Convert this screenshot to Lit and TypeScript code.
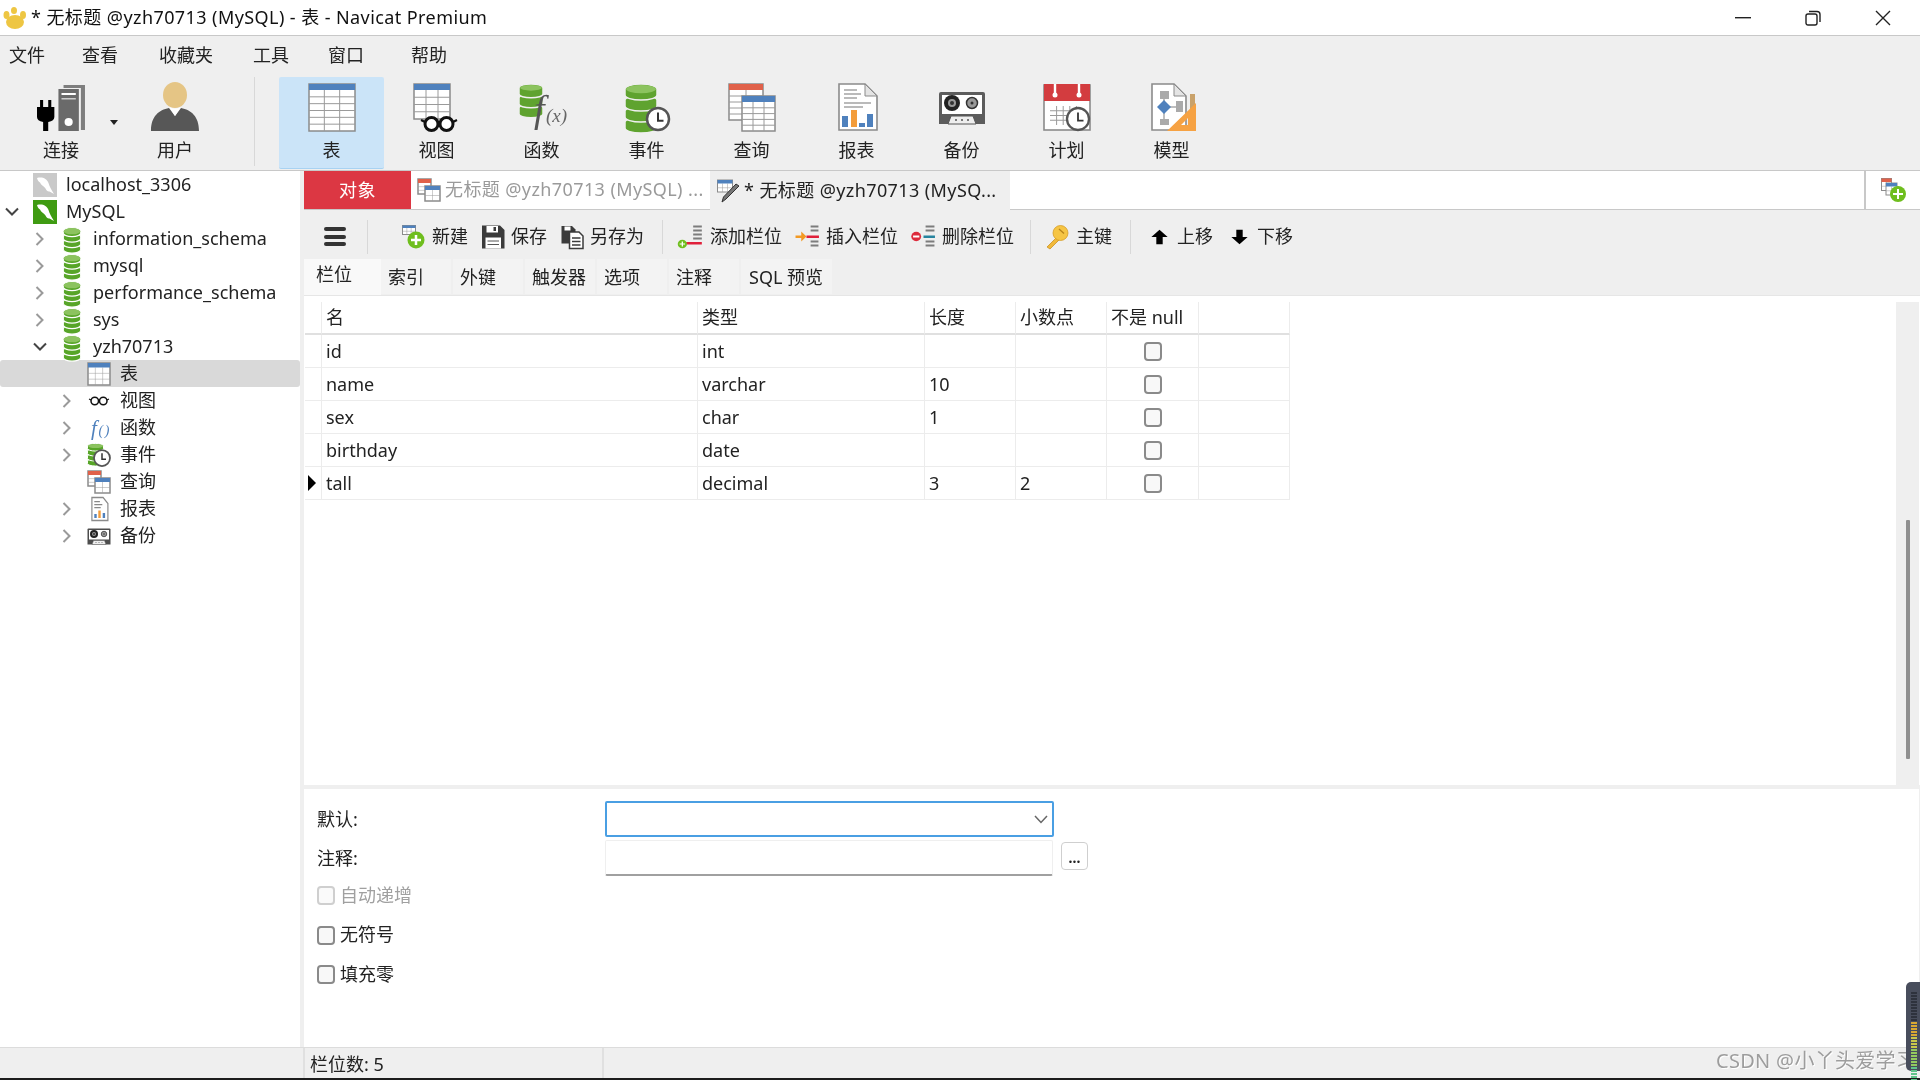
import { LitElement, html, css, svg } from "lit";
import { customElement } from "lit/decorators.js";

const G = "#8b8b8b", BL = "#4f81bd", RD = "#e0614a", GR = "#5fa32f";

const gridLines = (x: number, y: number, w: number, h: number, cols: number, rows: number, c = "#9a9a9a") => {
  const o = [];
  for (let i = 1; i < cols; i++) o.push(svg`<line x1=${x + (w * i) / cols} x2=${x + (w * i) / cols} y1=${y} y2=${y + h} stroke=${c} stroke-width="1"/>`);
  for (let i = 1; i < rows; i++) o.push(svg`<line y1=${y + (h * i) / rows} y2=${y + (h * i) / rows} x1=${x} x2=${x + w} stroke=${c} stroke-width="1"/>`);
  return o;
};
const tbl = (x: number, y: number, w: number, h: number, head: string, cols: number, rows: number, hh = 6, bw = 1.5) => svg`
  <rect x=${x} y=${y} width=${w} height=${h} fill="#fff" stroke="${G}" stroke-width=${bw}/>
  ${gridLines(x, y + hh, w, h - hh, cols, rows)}
  <rect x=${x} y=${y} width=${w} height=${hh} fill=${head}/>`;
/* stacked cylinder: tiers drawn bottom-up, each separated by a pale curved gap */
const cyl = (x: number, w: number, top: number, tierH: number, n: number, c = GR, gap = "#fff", sw = 1.5) => {
  const ry = w * 0.16;
  const tiers = [];
  for (let i = n - 1; i >= 0; i--) {
    const y = top + i * tierH;
    tiers.push(svg`<path d="M${x} ${y + ry} v${tierH - ry} a${w / 2} ${ry} 0 0 0 ${w} 0 v${-(tierH - ry)} a${w / 2} ${ry} 0 0 0 ${-w} 0z" fill=${c} stroke=${gap} stroke-width=${sw}/>`);
  }
  tiers.push(svg`<ellipse cx=${x + w / 2} cy=${top + ry} rx=${w / 2 - 1} ry=${ry - 1} fill="#8cc35f"/>`);
  return tiers;
};
const clock = (cx: number, cy: number, r: number, sw = 1.5) => svg`
  <circle cx=${cx} cy=${cy} r=${r} fill="#fff" stroke="#555" stroke-width=${sw + 0.5}/>
  <path d="M${cx} ${cy - r * 0.6} V${cy + r * 0.15} H${cx + r * 0.5}" fill="none" stroke="#333" stroke-width=${sw}/>`;
const glasses = (x: number, y: number, r: number, sw: number) => svg`
  <circle cx=${x - r - 1} cy=${y} r=${r} fill="#fff" stroke="#111" stroke-width=${sw}/>
  <circle cx=${x + r + 1} cy=${y} r=${r} fill="#fff" stroke="#111" stroke-width=${sw}/>
  <path d="M${x - 1} ${y} h2 M${x - 2 * r - 1} ${y - 2} l-4 -2 M${x + 2 * r + 1} ${y - 2} l4 -2" stroke="#111" stroke-width=${sw * 0.7} fill="none"/>`;
const cassette = (bg = "#5c5c5c") => svg`
  <path d="M3 9 H45 Q47 9 47 11 V41 H1 V11 Q1 9 3 9Z" fill=${bg}/>
  <rect x="4" y="12" width="40" height="19" fill="#fff"/>
  <circle cx="14" cy="20" r="8" fill="#222"/><circle cx="14" cy="20" r="4" fill="#999"/><circle cx="14" cy="20" r="2" fill="#333"/>
  <circle cx="34" cy="20" r="5.5" fill="#999" stroke="#333" stroke-width="1.5"/><circle cx="34" cy="20" r="1.5" fill="#333"/>
  <path d="M10 41 L13 33 H35 L38 41Z" fill="#eee" stroke="#555"/>
  <path d="M17 37 h2 M23 37 h2 M29 37 h2" stroke="#555" stroke-width="1.5"/>`;
const report = svg`
  <path d="M6 1 H32 L44 13 V47 H6Z" fill="#fff" stroke="${G}" stroke-width="1.6"/>
  <path d="M32 1 V13 H44Z" fill="#e4e4e4" stroke="${G}" stroke-width="1"/>
  <path d="M11 7 H24 M11 11 H28 M11 15 H24 M11 20 H38 M11 24 H30" stroke="#777" stroke-width="1.2"/>
  <rect x="9" y="33" width="6" height="11" fill="${BL}"/><rect x="18" y="27" width="6" height="17" fill="#f39c3a"/>
  <rect x="26" y="40" width="6" height="4" fill="${BL}"/><rect x="34" y="31" width="6" height="13" fill="${BL}"/>`;

const S = (size: number, inner: unknown, h = size) =>
  html`<svg width=${size} height=${h} viewBox="0 0 48 48" preserveAspectRatio="none">${inner}</svg>`;

const bigIcons: Record<string, unknown> = {
  conn: svg`
    <path d="M26 5 V2 H47 V47 H43 V5Z" fill="#7e7e7e"/>
    <rect x="21" y="6" width="20" height="42" fill="#6a6a6a"/>
    <rect x="24" y="10" width="14" height="2" fill="#fff"/><rect x="24" y="15" width="14" height="1.5" fill="#ccc"/>
    <circle cx="31" cy="39" r="4" fill="#fff"/>
    <path d="M3 17 h3 v7 h5 v-7 h3 v7 h3 V34 q0 4 -6 5 V48 h-5 V39 q-6 -1 -6 -5 V24 h3Z" fill="#000"/>`,
  user: svg`
    <ellipse cx="24" cy="12" rx="12" ry="13" fill="#e5c585"/>
    <path d="M0 48 C0 33 8 27 18 25 L24 33 L30 25 C40 27 48 33 48 48Z" fill="#575757"/>
    <path d="M18 24 L24 33 L30 24 Q24 27 18 24Z" fill="#fff"/>`,
  table: tbl(1, 1, 46, 47, BL, 3, 6),
  view: svg`${tbl(1, 1, 36, 35, BL, 3, 4)}${glasses(26, 41, 6.5, 3)}`,
  func: svg`
    ${cyl(1, 24, 1, 10, 3, GR, "#efefef")}
    <text x="16" y="39" font-family="Liberation Serif,serif" font-style="italic" font-size="38" fill="#555">f</text>
    <text x="28" y="39" font-family="Liberation Serif,serif" font-style="italic" font-size="19" fill="#666">(x)</text>`,
  event: svg`${cyl(2, 32, 1, 11, 4, GR, "#efefef")}${clock(35, 36, 11, 2)}`,
  query: svg`${tbl(1, 1, 34, 36, RD, 2, 5, 6)}${tbl(14, 13, 33, 35, BL, 3, 5, 6)}`,
  report,
  backup: cassette(),
  plan: svg`
    <rect x="1" y="2" width="46" height="45" fill="#fff" stroke="${G}" stroke-width="1.6"/>
    <rect x="1" y="1" width="46" height="17" fill="#d33c3f"/>
    <path d="M12 1 V11 M36 1 V11" stroke="#fff" stroke-width="2.4"/><circle cx="12" cy="12" r="2.5" fill="#fff"/><circle cx="36" cy="12" r="2.5" fill="#fff"/>
    ${gridLines(7, 23, 33, 19, 5, 4)}
    ${clock(35, 36, 11, 1.8)}`,
  model: svg`
    <path d="M4 1 H26 L38 13 V47 H4Z" fill="#fff" stroke="${G}" stroke-width="1.6"/>
    <path d="M26 1 V13 H38Z" fill="#e4e4e4" stroke="${G}"/>
    <rect x="42" y="11" width="5" height="22" fill="#c9a26b"/>
    <rect x="12" y="8" width="9" height="8" fill="#aaa"/><rect x="12" y="36" width="9" height="6" fill="#aaa"/>
    <rect x="28" y="18" width="7" height="11" fill="#aaa"/>
    <path d="M16 16 V36 M20 24 H30" stroke="#aaa" stroke-width="1.5"/>
    <path d="M16 17 L23 24 L16 31 L9 24Z" fill="${BL}"/>
    <path d="M48 20 V48 H19Z M40 35 L33 42 H40Z" fill="#f6a243" fill-rule="evenodd"/>`,
};

const smallIcons: Record<string, unknown> = {
  add: svg`
    ${tbl(1, 1, 26, 18, BL, 3, 2, 5, 2)}
    <circle cx="28" cy="30" r="17" fill="#6fbe1e"/>
    <path d="M28 20 V40 M18 30 H38" stroke="#fff" stroke-width="5"/>`,
  save: svg`
    <path d="M2 1 H38 L47 10 V47 H2Z" fill="#3b3b3b"/>
    <rect x="11" y="2" width="23" height="13" fill="#fff"/><rect x="25" y="4" width="5" height="8" fill="#3b3b3b"/>
    <rect x="9" y="25" width="31" height="22" fill="#fff"/><path d="M13 32 H36 M13 39 H36" stroke="#555" stroke-width="2"/>`,
  saveas: svg`
    <path d="M3 2 H24 L31 9 V37 H3Z" fill="#3b3b3b"/>
    <rect x="9" y="3" width="12" height="8" fill="#fff"/>
    <path d="M19 14 H38 L46 22 V47 H19Z" fill="#fff" stroke="#3b3b3b" stroke-width="3"/>
    <path d="M24 26 H41 M24 33 H41 M24 40 H41" stroke="#3b3b3b" stroke-width="3"/>`,
  addc: svg`
    <path d="M28 3 H44 M28 11 H44 M28 19 H44 M28 27 H44" stroke="#7c7c7c" stroke-width="4"/>
    <rect x="15" y="34" width="29" height="5" fill="#e0203a"/>
    <circle cx="8" cy="38" r="8.5" fill="#6fbe1e"/><path d="M8 33 V43 M3 38 H13" stroke="#fff" stroke-width="2.4"/>`,
  insc: svg`
    <path d="M30 3 H45 M30 11 H45 M30 33 H45 M30 41 H45" stroke="#7c7c7c" stroke-width="4"/>
    <rect x="22" y="21" width="24" height="5" fill="#e0203a"/>
    <path d="M1 21 H12 V13 L22 23 L12 33 V26 H1Z" fill="#f39a24"/>`,
  delc: svg`
    <path d="M28 3 H45 M28 11 H45 M28 33 H45 M28 41 H45" stroke="#7c7c7c" stroke-width="4"/>
    <rect x="24" y="21" width="22" height="5" fill="#27849f"/>
    <circle cx="10" cy="23" r="9.5" fill="#dd2b3c"/><rect x="4" y="21" width="12" height="4" fill="#fff"/>`,
  key: svg`
    <path d="M24 24 L4 44 L10 48 L30 28Z" fill="#f1b93a" stroke="#c98f1c" stroke-width="1.5"/>
    <circle cx="31" cy="16" r="15" fill="#f6c544" stroke="#d49a22" stroke-width="1.5"/>
    <path d="M28 8 L38 17" stroke="#b88318" stroke-width="2.5"/>`,
  up: svg`<path d="M24 2 L47 24 H33 V46 H15 V24 H1Z" fill="#000"/>`,
  down: svg`<path d="M24 46 L47 24 H33 V2 H15 V24 H1Z" fill="#000"/>`,
};

const dolphin = "M8 10 C18 7 28 11 31 20 C33 27 36 32 42 42 L33 37 C30 38 27 35 25 31 C21 26 16 24 14 19 C11 17 9 14 8 10Z";
const treeIcons: Record<string, unknown> = {
  lhost: svg`<rect x="0" y="0" width="48" height="48" fill="#c9c9c9"/><path d=${dolphin} fill="#fff"/>`,
  mysql: svg`<rect x="0" y="0" width="48" height="48" fill="#3f9b12"/><path d=${dolphin} fill="#fff"/>`,
  db: svg`${cyl(1, 46, 1, 11, 4, "#57a528", "#fff", 2.5)}`,
  table: tbl(2, 2, 44, 44, BL, 3, 3, 9, 3),
  view: svg`<g transform="translate(0 -17)">${glasses(24, 41, 7.5, 3)}</g>`,
  func: svg`<text x="8" y="38" font-family="Liberation Serif,serif" font-style="italic" font-size="42" fill="${BL}">f</text><text x="23" y="38" letter-spacing="3" font-family="Liberation Serif,serif" font-style="italic" font-size="28" fill="${BL}">()</text>`,
  event: svg`${cyl(1, 32, 1, 10, 4, "#57a528", "#fff", 2)}${clock(30, 30, 16, 3)}`,
  query: svg`${tbl(2, 2, 26, 30, RD, 1, 3, 8, 3)}${tbl(16, 16, 30, 30, BL, 2, 2, 8, 3)}`,
  report: svg`
    <g transform="translate(5 0) scale(.8 1)">
    <path d="M6 1 H34 L46 13 V47 H6Z" fill="#fff" stroke="${G}" stroke-width="3"/>
    <path d="M12 9 H26 M12 15 H32 M12 21 H28" stroke="#888" stroke-width="2.5"/>
    <rect x="12" y="34" width="6" height="8" fill="${BL}"/><rect x="22" y="27" width="6" height="15" fill="#f39c3a"/><rect x="33" y="32" width="6" height="10" fill="${BL}"/></g>`,
  backup: cassette("#4d4d4d"),
};

const chevDown = html`<svg width="16" height="10" viewBox="0 0 16 10"><path d="M2 1.5 L8 7.5 L14 1.5" fill="none" stroke="#444" stroke-width="2"/></svg>`;
const chevRight = html`<svg width="10" height="16" viewBox="0 0 10 16"><path d="M1.5 2 L7.5 8 L1.5 14" fill="none" stroke="#9a9a9a" stroke-width="2"/></svg>`;

const TREE = [
  { l: 0, c: "", i: "lhost", t: "localhost_3306", s: 24 },
  { l: 0, c: "d", i: "mysql", t: "MySQL", s: 24 },
  { l: 1, c: "r", i: "db", t: "information_schema", s: 18 },
  { l: 1, c: "r", i: "db", t: "mysql", s: 18 },
  { l: 1, c: "r", i: "db", t: "performance_schema", s: 18 },
  { l: 1, c: "r", i: "db", t: "sys", s: 18 },
  { l: 1, c: "d", i: "db", t: "yzh70713", s: 18 },
  { l: 2, c: "", i: "table", t: "表", s: 24, sel: true },
  { l: 2, c: "r", i: "view", t: "视图", s: 24 },
  { l: 2, c: "r", i: "func", t: "函数", s: 24 },
  { l: 2, c: "r", i: "event", t: "事件", s: 24 },
  { l: 2, c: "", i: "query", t: "查询", s: 24 },
  { l: 2, c: "r", i: "report", t: "报表", s: 24 },
  { l: 2, c: "r", i: "backup", t: "备份", s: 24 },
];
const ROWS = [
  ["id", "int", "", ""],
  ["name", "varchar", "10", ""],
  ["sex", "char", "1", ""],
  ["birthday", "date", "", ""],
  ["tall", "decimal", "3", "2"],
];
const TOOLS = [
  ["table", "表", true], ["view", "视图"], ["func", "函数"], ["event", "事件"], ["query", "查询"],
  ["report", "报表"], ["backup", "备份"], ["plan", "计划"], ["model", "模型"],
] as [string, string, boolean?][];
const LEDS = Array.from({ length: 34 }, (_, i) => {
  if (i < 10) return "#2e323d";
  if (i < 15) return "#d9a832";
  if (i < 19) return "#c9c84a";
  if (i < 25) return "#93c95e";
  if (i < 30) return "#5fc48a";
  return "#3cc0a5";
});

@customElement("app-root")
export class AppRoot extends LitElement {
  static styles = css`
    :host { display: block; position: relative; width: 1920px; height: 1080px; overflow: hidden; background: #efefef;
      font: 18px/1.2 "Noto Sans", "Noto Sans CJK SC", sans-serif; color: #222; filter: blur(0.35px); }
    svg { display: block; flex: none; overflow: visible; }
    .title { height: 35px; background: #fff; border-bottom: 1px solid #c8c8c8; display: flex; align-items: center; color: #111; }
    .paw { margin: 0 4px 0 3px; }
    .title-text { flex: 1; letter-spacing: 0.42px; }
    .winbtns { display: flex; margin-right: 2px; }
    .winbtns div { width: 70px; height: 35px; display: flex; align-items: center; justify-content: center; }
    .menu { height: 36px; display: grid; grid-template-columns: 73px 77px 94px 75px 83px auto; padding: 3px 0 0 9px; box-sizing: border-box; align-items: center; }
    .toolbar { height: 98px; display: flex; padding-left: 8px; border-bottom: 1px solid #c8c8c8; }
    .tool { width: 105px; height: 91px; margin-top: 5px; display: flex; flex-direction: column; align-items: center; }
    .tool svg { margin-top: 6px; }
    .tool span { margin-top: 9px; }
    .tool.on { background: #cbe4f8; border-bottom: 1px solid #a8d2f2; border-radius: 2px; }
    .tool.conn { width: 106px; position: relative; }
    .caret { position: absolute; right: -4px; top: 43px; width: 0; height: 0; border: 4px solid transparent; border-top: 5px solid #222; }
    .tool.user { width: 122px; }
    .sep { width: 1px; height: 89px; margin: 5px 24px 0 18px; background: #d8d8d8; }
    .body { height: 876px; display: flex; }
    .tree { width: 300px; background: #fff; flex: none; }
    .row { height: 27px; display: flex; align-items: center; }
    .row.sel { background: #d9d9d9; border-radius: 3px; }
    .chev { width: 18px; display: flex; justify-content: center; flex: none; }
    .l0 { padding-left: 3px; } .l0 .chev { margin-right: 12px; } .l0 .lab { margin-left: 9px; }
    .l1 { padding-left: 31px; } .l1 .chev { margin-right: 14px; } .l1 .lab { margin-left: 12px; }
    .l2 { padding-left: 58px; } .l2 .chev { margin-right: 11px; } .l2 .lab { margin-left: 9px; }
    .work { flex: 1; margin-left: 4px; display: flex; flex-direction: column; min-width: 0; }
    .tabs { height: 38px; display: flex; background: #fff; border-bottom: 1px solid #c8c8c8; }
    .tab { display: flex; align-items: center; height: 38px; box-sizing: border-box; white-space: nowrap; letter-spacing: 0.4px; }
    .tab.obj { width: 107px; justify-content: center; background: #dc3743; color: #fff; padding-top: 1px; }
    .tab.t2 { width: 299px; padding-left: 6px; color: #9a9a9a; gap: 4px; }
    .tab.t3 { width: 300px; padding-left: 7px; background: #efefef; height: 39px; gap: 3px; color: #222; }
    .tab-space { flex: 1; }
    .tab-add { width: 52px; border-left: 2px solid #c8c8c8; display: flex; align-items: center; justify-content: center; padding-left: 2px; }
    .tb2 { height: 45px; margin-top: 2px; padding: 2px 0 0 20px; display: flex; align-items: center; }
    .burger { width: 22px; height: 19px; display: flex; flex-direction: column; justify-content: space-between; }
    .burger i { height: 4px; border-radius: 2px; background: #333; display: block; }
    .sep2 { width: 1px; height: 34px; background: #d8d8d8; }
    .sep2.a { margin: 0 34px 0 21px; }
    .sep2.b { margin: 0 15px 0 5px; }
    .sep2.c { margin: 0 14px 0 3px; }
    .sep2.d { margin: 0 20px 0 5px; }
    .btn { display: flex; align-items: center; gap: 6px; margin-right: 13px; white-space: nowrap; }
    .btn.key { gap: 7px; }
    .btn.move { margin-right: 18px; gap: 9px; }
    .btn.move.last { margin-right: 0; }
    .subtabs { height: 36px; display: flex; gap: 2px; border-bottom: 1px solid #e6e6e6; }
    .sub { width: 70px; padding: 8px 0 0 7px; box-sizing: border-box; background: #f3f3f3; height: 35px; white-space: nowrap; }
    .sub.on { width: 77px; background: #f9f9f9; padding: 5px 0 0 12px; margin-right: -2px; height: 36px; }
    .sub.sql { width: 91px; padding-left: 8px; }
    .grid-area { height: 489px; display: flex; background: #fff; }
    .grid-wrap { flex: 1; padding: 6px 0 0 1px; }
    .grid { display: grid; grid-template-columns: 17px 376px 227px 91px 91px 92px 91px; grid-auto-rows: 33px; width: 985px; }
    .cell { border-right: 1px solid #ececec; border-bottom: 1px solid #ececec; padding: 1px 0 0 4px; display: flex; align-items: center; box-sizing: border-box; }
    .cell.h { border-bottom: 2px solid #e0e0e0; }
    .cell.ind { padding: 0 0 0 3px; }
    .arrow { width: 0; height: 0; border-left: 8px solid #000; border-top: 8px solid transparent; border-bottom: 8px solid transparent; }
    .cell.chk { justify-content: center; padding: 0; }
    .box { width: 18px; height: 19px; border: 2px solid #8a8a8a; border-radius: 4px; background: #f8f8f8; box-sizing: border-box; flex: none; }
    .box.off { border-color: #cfcfcf; background: #fafafa; }
    .vscroll { width: 23px; margin-right: 1px; background: #efefef; margin-top: 6px; padding: 218px 0 0 10px; box-sizing: border-box; }
    .thumb { width: 4px; height: 239px; background: #8f8f8f; border-radius: 1px; }
    .divider { height: 4px; background: #efefef; }
    .form { flex: 1; background: #fff; padding: 12px 0 0 13px; margin-right: 1px; }
    .frow { display: flex; align-items: center; }
    .flabel { width: 288px; padding-top: 2px; }
    .combo { width: 449px; height: 36px; box-sizing: border-box; border: 2px solid #4a9fe3; border-radius: 2px; display: flex; align-items: center; justify-content: flex-end; padding-right: 4px; }
    .frow.second { margin-top: 3px; }
    .input { width: 448px; height: 36px; box-sizing: border-box; border: 1px solid #efefef; border-bottom: 2px solid #a0a0a0; border-radius: 2px; }
    .dots { width: 27px; height: 28px; margin: -4px 0 0 8px; border: 1px solid #cfcfcf; border-radius: 4px; box-sizing: border-box; display: flex; justify-content: center; align-items: flex-end; font-size: 14px; font-weight: 700; color: #222; padding-bottom: 4px; line-height: 1; }
    .cb { height: 39.5px; display: flex; align-items: center; gap: 5px; }
    .cb.off { color: #a0a0a0; }
    .status { height: 30px; border-top: 1px solid #dcdcdc; display: flex; }
    .st1 { width: 305px; border-right: 2px solid #e0e0e0; box-sizing: border-box; }
    .st2 { width: 299px; border-right: 2px solid #e0e0e0; box-sizing: border-box; padding: 6px 0 0 5px; }
    .black { height: 2px; background: #1c1c1c; }
    .mark { position: absolute; left: 1716px; top: 1049px; font-size: 20px; letter-spacing: 0.3px; color: #9d9d9d; text-shadow: 1px 1px 0 #fff; white-space: nowrap; }
    .meter { position: absolute; left: 1906px; top: 982px; width: 14px; height: 89px; border-radius: 5px 0 0 5px; background: #484d5c; padding: 10px 0 0 5px; box-sizing: border-box; }
    .meter i { display: block; width: 6px; height: 2px; margin-bottom: 1px; }
  `;

  private tree() {
    return TREE.map((r) => html`
      <div class="row l${r.l} ${r.sel ? "sel" : ""}">
        <span class="chev">${r.c === "d" ? chevDown : r.c === "r" ? chevRight : ""}</span>
        ${S(r.s, treeIcons[r.i], 24)}
        <span class="lab">${r.t}</span>
      </div>`);
  }

  private btn(icon: string, label: string, size = 24, cls = "", h = 24) {
    return html`<div class="btn ${cls}">${S(size, smallIcons[icon], h)}<span>${label}</span></div>`;
  }

  render() {
    return html`
      <div class="title">
        <svg class="paw" width="24" height="24" viewBox="0 0 24 24">
          <ellipse cx="12" cy="16" rx="9" ry="7" fill="#eec643"/><ellipse cx="3.5" cy="9" rx="3" ry="4" fill="#eec643"/>
          <ellipse cx="11" cy="4.5" rx="3" ry="3.5" fill="#eec643"/><ellipse cx="20" cy="9" rx="3" ry="4" fill="#eec643"/>
        </svg>
        <span class="title-text">* 无标题 @yzh70713 (MySQL) - 表 - Navicat Premium</span>
        <div class="winbtns">
          <div><svg width="16" height="2"><rect width="16" height="1.4" fill="#222"/></svg></div>
          <div><svg width="16" height="16" viewBox="0 0 16 16"><rect x="1" y="4" width="11" height="11" rx="2" fill="none" stroke="#222" stroke-width="1.4"/><path d="M4 1.5 H12 Q15 1.5 15 4.5 V12" fill="none" stroke="#222" stroke-width="1.4"/></svg></div>
          <div><svg width="16" height="16" viewBox="0 0 16 16"><path d="M1 1 L15 15 M15 1 L1 15" stroke="#222" stroke-width="1.4"/></svg></div>
        </div>
      </div>
      <div class="menu">${["文件", "查看", "收藏夹", "工具", "窗口", "帮助"].map((m) => html`<span>${m}</span>`)}</div>
      <div class="toolbar">
        <div class="tool conn">${S(49, bigIcons.conn, 48)}<span>连接</span><i class="caret"></i></div>
        <div class="tool user">${S(48, bigIcons.user)}<span>用户</span></div>
        <div class="sep"></div>
        ${TOOLS.map(([i, t, on]) => html`<div class="tool ${on ? "on" : ""}">${S(48, bigIcons[i])}<span>${t}</span></div>`)}
      </div>
      <div class="body">
        <aside class="tree">${this.tree()}</aside>
        <section class="work">
          <div class="tabs">
            <div class="tab obj">对象</div>
            <div class="tab t2">${S(24, treeIcons.query)}<span>无标题 @yzh70713 (MySQL) ...</span></div>
            <div class="tab t3">
              <svg width="24" height="24" viewBox="0 0 48 48">${tbl(1, 2, 30, 24, BL, 3, 2, 7, 2)}<path d="M44 14 L18 40 L10 46 L13 36 L38 10Z" fill="#777" stroke="#333" stroke-width="2"/></svg>
              <span>* 无标题 @yzh70713 (MySQ...</span>
            </div>
            <div class="tab-space"></div>
            <div class="tab-add">
              <svg width="26" height="24" viewBox="0 0 52 48">${tbl(1, 1, 20, 24, RD, 2, 2, 7, 2)}${tbl(10, 10, 22, 24, BL, 2, 2, 7, 2)}<circle cx="34" cy="32" r="16" fill="#6fbe1e"/><path d="M34 22 V42 M24 32 H44" stroke="#fff" stroke-width="4"/></svg>
            </div>
          </div>
          <div class="tb2">
            <div class="burger"><i></i><i></i><i></i></div>
            <div class="sep2 a"></div>
            ${this.btn("add", "新建")}${this.btn("save", "保存")}${this.btn("saveas", "另存为")}
            <div class="sep2 b"></div>
            ${this.btn("addc", "添加栏位", 26)}${this.btn("insc", "插入栏位", 25)}${this.btn("delc", "删除栏位", 25)}
            <div class="sep2 c"></div>
            ${this.btn("key", "主键", 24, "key")}
            <div class="sep2 d"></div>
            ${this.btn("up", "上移", 17, "move", 16)}${this.btn("down", "下移", 17, "move last", 16)}
          </div>
          <div class="subtabs">
            <div class="sub on">栏位</div><div class="sub">索引</div><div class="sub">外键</div>
            <div class="sub">触发器</div><div class="sub">选项</div><div class="sub">注释</div>
            <div class="sub sql">SQL 预览</div>
          </div>
          <div class="grid-area">
            <div class="grid-wrap">
              <div class="grid">
                <div class="cell h"></div>
                ${["名", "类型", "长度", "小数点", "不是 null", ""].map((h) => html`<div class="cell h">${h}</div>`)}
                ${ROWS.map((r, i) => html`
                  <div class="cell ind">${i === 4 ? html`<i class="arrow"></i>` : ""}</div>
                  ${r.map((c) => html`<div class="cell">${c}</div>`)}
                  <div class="cell chk"><i class="box"></i></div>
                  <div class="cell"></div>`)}
              </div>
            </div>
            <div class="vscroll"><div class="thumb"></div></div>
          </div>
          <div class="divider"></div>
          <div class="form">
            <div class="frow">
              <span class="flabel">默认:</span>
              <div class="combo"><svg width="14" height="9" viewBox="0 0 14 9"><path d="M1 1 L7 7.5 L13 1" fill="none" stroke="#666" stroke-width="1.5"/></svg></div>
            </div>
            <div class="frow second">
              <span class="flabel">注释:</span>
              <div class="input"></div>
              <div class="dots">...</div>
            </div>
            <div class="cb off"><i class="box off"></i><span>自动递增</span></div>
            <div class="cb"><i class="box"></i><span>无符号</span></div>
            <div class="cb"><i class="box"></i><span>填充零</span></div>
          </div>
        </section>
      </div>
      <div class="status">
        <div class="st1"></div>
        <div class="st2">栏位数: 5</div>
      </div>
      <div class="black"></div>
      <div class="mark">CSDN @小丫头爱学习</div>
      <div class="meter">${LEDS.map((c) => html`<i style="background:${c}"></i>`)}</div>
    `;
  }
}
